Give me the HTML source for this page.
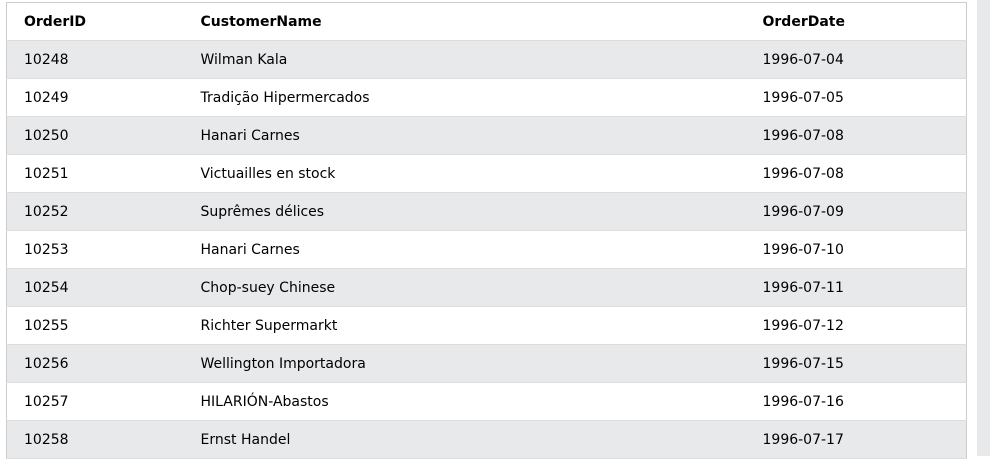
<!DOCTYPE html>
<html><head><style>
body{margin:0;background:#fff;width:990px;height:456px;overflow:hidden;position:relative;font-family:"DejaVu Sans",Verdana,sans-serif;font-size:14px;color:#000}
.sb{position:absolute;left:977px;top:0;width:13px;height:456px;background:#e7e9eb}
table{position:absolute;left:6px;top:2px;width:961px;border-collapse:collapse;border:1px solid #ccc}
td,th{height:38px;padding:0 0 0 17px;text-align:left;border-bottom:1px solid #ddd;box-sizing:border-box;white-space:nowrap}
th{font-weight:bold}
tr:nth-child(even) td{background:#e7e9eb}
</style></head><body>
<div class="sb"></div>
<table>
<colgroup><col style="width:177px"><col style="width:562px"><col></colgroup>
<tr><th>OrderID</th><th>CustomerName</th><th>OrderDate</th></tr>
<tr><td>10248</td><td>Wilman Kala</td><td>1996-07-04</td></tr>
<tr><td>10249</td><td>Tradição Hipermercados</td><td>1996-07-05</td></tr>
<tr><td>10250</td><td>Hanari Carnes</td><td>1996-07-08</td></tr>
<tr><td>10251</td><td>Victuailles en stock</td><td>1996-07-08</td></tr>
<tr><td>10252</td><td>Suprêmes délices</td><td>1996-07-09</td></tr>
<tr><td>10253</td><td>Hanari Carnes</td><td>1996-07-10</td></tr>
<tr><td>10254</td><td>Chop-suey Chinese</td><td>1996-07-11</td></tr>
<tr><td>10255</td><td>Richter Supermarkt</td><td>1996-07-12</td></tr>
<tr><td>10256</td><td>Wellington Importadora</td><td>1996-07-15</td></tr>
<tr><td>10257</td><td>HILARIÓN-Abastos</td><td>1996-07-16</td></tr>
<tr><td>10258</td><td>Ernst Handel</td><td>1996-07-17</td></tr>
</table>
</body></html>
